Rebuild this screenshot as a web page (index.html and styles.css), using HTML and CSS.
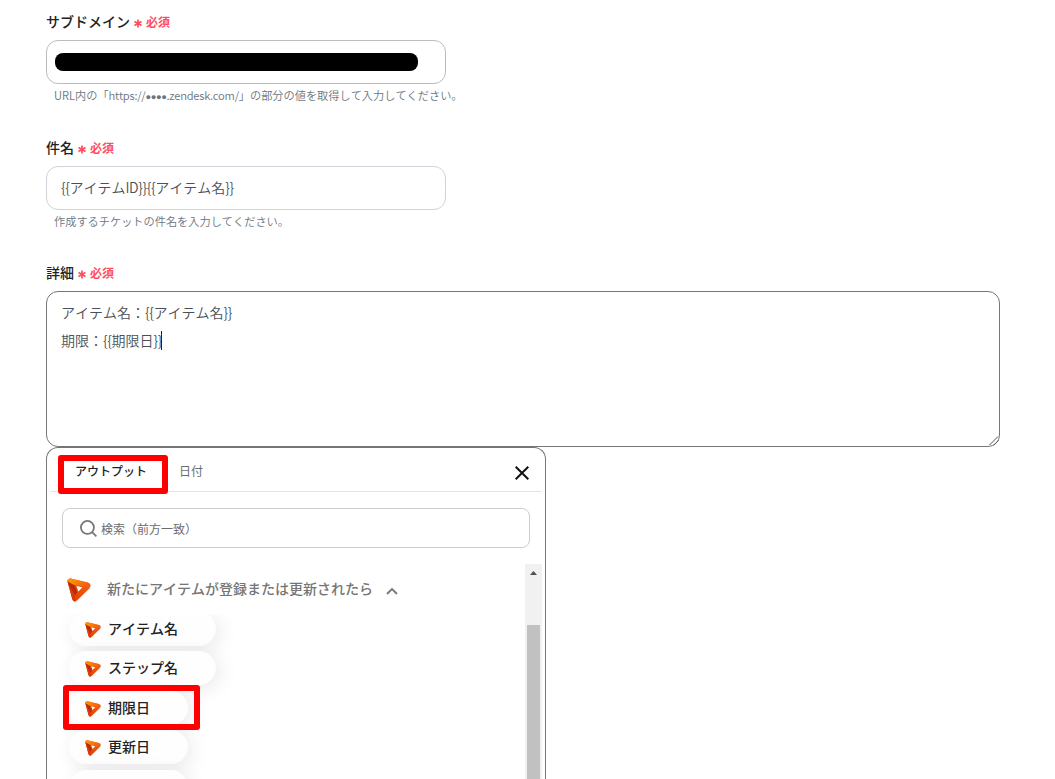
FILE: index.html
```html
<!DOCTYPE html>
<html lang="ja">
  <head>
    <meta charset="UTF-8" />
    <meta name="viewport" content="width=device-width, initial-scale=1.0" />
    <title>チケットの作成</title>
    <link rel="stylesheet" href="styles.css">
  </head>
  <body>
    <svg width="0" height="0" class="defs">
      <defs>
        <linearGradient id="logo-top" x1="0" y1="0" x2="1" y2="0.3">
          <stop offset="0" stop-color="#ff9c00" />
          <stop offset="1" stop-color="#f4600c" />
        </linearGradient>
        <linearGradient id="logo-right" x1="1" y1="0" x2="0" y2="1">
          <stop offset="0" stop-color="#f4661a" />
          <stop offset="1" stop-color="#e23a00" />
        </linearGradient>
        <symbol id="logo" viewBox="0 0 24 24">
          <path d="M3.6 0.4Q0.2 0.2 0.5 3.4L5.2 21Q6.6 25 10 22.6L22.4 10.4Q25.4 5.8 20.6 4.4Z" fill="url(#logo-right)" />
          <path d="M0.4 3L1.4 6.4L7.8 17.6L10.4 14.6L8 8L6 5.4Z" fill="#b92b05" />
          <path d="M1.2 6L5.2 21Q6.2 24 8.4 23.3L8.2 17Z" fill="#d93a06" />
          <path d="M0.4 3.2Q0.2 0.2 3.6 0.4L20.6 4.4Q23 5 23.4 7L17.6 9.4L15 8L6.6 6.8Z" fill="url(#logo-top)" />
          <path d="M9.4 8L15.4 9.2L11.4 13.6Z" fill="#fff" />
        </symbol>
      </defs>
    </svg>

    <main class="form">
      <div class="form-group">
        <label for="subdomain">サブドメイン<span class="required"><svg class="asterisk" viewBox="0 0 8 8"><path d="M4 0V8M0.5 2L7.5 6M7.5 2L0.5 6" /></svg>必須</span></label>
        <div class="input masked" id="subdomain"><span class="mask"></span></div>
        <p class="help">URL内の「<span class="help-url">https://<span class="dots">●●●●</span>.zendesk.com/</span>」の部分の値を取得して入力してください。</p>
      </div>

      <div class="form-group">
        <label for="subject">件名<span class="required"><svg class="asterisk" viewBox="0 0 8 8"><path d="M4 0V8M0.5 2L7.5 6M7.5 2L0.5 6" /></svg>必須</span></label>
        <div class="input light" id="subject"><span><i>{{</i>アイテム<i>ID}}{{</i>アイテム名<i>}}</i></span></div>
        <p class="help">作成するチケットの件名を入力してください。</p>
      </div>

      <div class="form-group detail">
        <label for="detail">詳細<span class="required"><svg class="asterisk" viewBox="0 0 8 8"><path d="M4 0V8M0.5 2L7.5 6M7.5 2L0.5 6" /></svg>必須</span></label>
        <div class="textarea" id="detail">
          <div>アイテム名：<i>{{</i>アイテム名<i>}}</i></div>
          <div>期限：<i>{{</i>期限日<i>}}</i><span class="caret"></span></div>
          <svg class="resize" viewBox="0 0 10 10"><path d="M0.5 9L9 0.5M4.5 9.5L9.5 4.5" /></svg>
        </div>
      </div>

      <section class="panel">
        <div class="tabs">
          <div class="tab active">アウトプット<span class="marker marker-tab"></span></div>
          <div class="tab">日付</div>
          <svg class="close" viewBox="0 0 14 14"><path d="M0.7 0.7L13.3 13.3M13.3 0.7L0.7 13.3" /></svg>
        </div>
        <div class="search">
          <svg class="search-icon" viewBox="0 0 16 16"><circle cx="7" cy="7" r="6.1" /><path d="M11.4 11.4L15.4 15.4" /></svg>
          <span>検索（前方一致）</span>
        </div>
        <div class="outputs">
          <div class="output-list">
            <div class="app">
              <svg class="app-logo"><use href="#logo" /></svg>
              <span class="app-name">新たにアイテムが登録または更新されたら</span>
              <svg class="chevron" viewBox="0 0 12 8"><path d="M1 7L6 2L11 7" /></svg>
            </div>
            <div class="chips">
              <div class="chip wide"><svg class="chip-logo"><use href="#logo" /></svg><span>アイテム名</span></div>
              <div class="chip wide"><svg class="chip-logo"><use href="#logo" /></svg><span>ステップ名</span></div>
              <div class="chip"><svg class="chip-logo"><use href="#logo" /></svg><span>期限日</span><div class="marker marker-chip"></div></div>
              <div class="chip"><svg class="chip-logo"><use href="#logo" /></svg><span>更新日</span></div>
              <div class="chip"></div>
            </div>
          </div>
          <div class="scrollbar">
            <svg class="arrow-up" viewBox="0 0 7 4"><path d="M0 4L3.5 0L7 4Z" /></svg>
            <div class="thumb"></div>
          </div>
        </div>
      </section>
    </main>
  </body>
</html>
```

FILE: styles.css
```css
* {
  box-sizing: border-box;
}
body {
  margin: 0;
  background: #fff;
  color: #222;
  font-family: "Noto Sans CJK JP", "Noto Sans", sans-serif;
  font-size: 14px;
  font-kerning: none;
}
i {
  font-style: normal;
  letter-spacing: -0.4px;
}
.defs {
  position: absolute;
}
.form {
  padding: 11px 55px 0 46px;
}
.form-group {
  height: 126px;
}
.form-group.detail {
  height: auto;
  margin-top: -1px;
}
label {
  display: flex;
  align-items: center;
  height: 20px;
  margin-bottom: 9px;
  font-weight: 500;
}
.required {
  display: flex;
  align-items: center;
  margin-left: 4px;
  padding-top: 1px;
  font-size: 12px;
  font-weight: 700;
  color: #ff4d5e;
}
.asterisk {
  width: 8px;
  height: 9px;
  margin: 3px 4px 0 0;
  fill: none;
  stroke: #ff4d5e;
  stroke-width: 1.7;
}
.input {
  display: flex;
  align-items: center;
  width: 400px;
  height: 44px;
  padding: 0 14px 3px;
  border: 1px solid #b9bcc1;
  border-radius: 12px;
  color: #495057;
  font-weight: 350;
}
.input.light {
  border-color: #ced4da;
}
.input.masked {
  padding: 0 8px;
}
.mask {
  width: 363px;
  height: 18px;
  border-radius: 8px;
  background: #000;
}
.help {
  margin: 2px 0 0 8px;
  font-size: 11.2px;
  line-height: 18px;
  font-weight: 350;
  color: #6c757d;
  white-space: nowrap;
}
.help-url {
  letter-spacing: -0.25px;
}
.dots {
  font-family: "DejaVu Sans", sans-serif;
  font-size: 9.4px;
  letter-spacing: -0.4px;
}
.textarea {
  position: relative;
  width: 954px;
  height: 156px;
  padding: 6px 14px;
  border: 1px solid #767676;
  border-radius: 12px;
  color: #495057;
  font-weight: 350;
  line-height: 28px;
}
.caret {
  display: inline-block;
  width: 1px;
  height: 19px;
  margin-left: -1px;
  vertical-align: -4px;
  background: #222;
}
.resize {
  position: absolute;
  right: 0;
  bottom: 0;
  width: 10px;
  height: 10px;
  fill: none;
  stroke: #555;
}
.panel {
  width: 500px;
  height: 332px;
  overflow: hidden;
  padding: 0 3px;
  border: 1px solid #767676;
  border-bottom: none;
  border-radius: 12px 12px 0 0;
}
.tabs {
  display: flex;
  align-items: center;
  height: 44px;
  padding: 0 13px 0 9px;
  border-bottom: 1px solid #e3e3e3;
  font-size: 12px;
}
.tab {
  height: 40px;
  line-height: 42px;
  padding: 0 16px;
  color: #6c6c6c;
}
.tab.active {
  position: relative;
  width: 104px;
  border-bottom: 2px solid #1b6f7c;
  color: #222;
  font-weight: 500;
}
.close {
  width: 14px;
  height: 14px;
  margin-left: auto;
  margin-top: 6px;
  fill: none;
  stroke: #111;
  stroke-width: 2;
}
.marker {
  position: absolute;
  border: 6px solid #fe0000;
  border-radius: 3px;
}
.marker-tab {
  left: -1px;
  top: 5px;
  width: 110px;
  height: 39px;
}
.search {
  display: flex;
  align-items: center;
  height: 40px;
  margin: 16px 12px;
  padding: 1px 17px 0;
  border: 1px solid #ccc;
  border-radius: 8px;
  color: #6c6c6c;
  font-size: 12px;
}
.search-icon {
  width: 17px;
  height: 17px;
  margin-right: 4px;
  fill: none;
  stroke: #777;
  stroke-width: 1.7;
}
.outputs {
  display: flex;
  height: 215px;
}
.output-list {
  flex: 1;
}
.app {
  display: flex;
  align-items: center;
  height: 50px;
  padding: 2px 0 0 17px;
  color: #757575;
  font-weight: 500;
}
.app-logo {
  width: 24px;
  height: 24px;
  margin-right: 16px;
}
.app-name {
  margin-top: -4px;
}
.chevron {
  width: 12px;
  height: 8px;
  margin: 2px 0 0 13px;
  fill: none;
  stroke: #777;
  stroke-width: 1.8;
}
.chips {
  height: 165px;
  overflow: hidden;
  padding-left: 13px;
}
.chip {
  position: relative;
  display: flex;
  align-items: center;
  width: 119px;
  height: 34px;
  margin: 0 0 5.4px 6px;
  padding-left: 16px;
  border-radius: 17px;
  background: #fefefe;
  box-shadow: 4px 4px 20px rgba(0, 0, 0, 0.09);
  font-weight: 500;
}
.chip span {
  margin-top: -2px;
}
.chip:first-child {
  margin-top: -2px;
}
.chip.wide {
  width: 147px;
}
.chip-logo {
  width: 16px;
  height: 16px;
  margin: 2px 7px 0 0;
}
.marker-chip {
  left: -6px;
  top: -6px;
  width: 137px;
  height: 45px;
}
.scrollbar {
  width: 17px;
  padding: 7px 2px 0;
  background: #f1f1f1;
}
.arrow-up {
  display: block;
  width: 7px;
  height: 4px;
  margin: 0 auto 50px;
  fill: #505050;
}
.thumb {
  height: 154px;
  background: #c1c1c1;
}
```
